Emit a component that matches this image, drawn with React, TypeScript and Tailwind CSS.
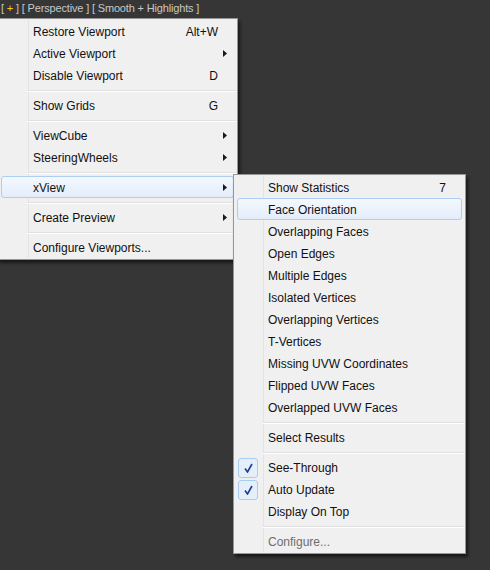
import React from "react";

type Item =
  | { kind: "sep" }
  | {
      kind: "item";
      label: string;
      shortcut?: string;
      arrow?: boolean;
      active?: boolean;
      checked?: boolean;
      disabled?: boolean;
    };

const sep: Item = { kind: "sep" };

const mainItems: Item[] = [
  { kind: "item", label: "Restore Viewport", shortcut: "Alt+W" },
  { kind: "item", label: "Active Viewport", arrow: true },
  { kind: "item", label: "Disable Viewport", shortcut: "D" },
  sep,
  { kind: "item", label: "Show Grids", shortcut: "G" },
  sep,
  { kind: "item", label: "ViewCube", arrow: true },
  { kind: "item", label: "SteeringWheels", arrow: true },
  sep,
  { kind: "item", label: "xView", arrow: true, active: true },
  sep,
  { kind: "item", label: "Create Preview", arrow: true },
  sep,
  { kind: "item", label: "Configure Viewports..." },
];

const xviewItems: Item[] = [
  { kind: "item", label: "Show Statistics", shortcut: "7" },
  { kind: "item", label: "Face Orientation", active: true },
  { kind: "item", label: "Overlapping Faces" },
  { kind: "item", label: "Open Edges" },
  { kind: "item", label: "Multiple Edges" },
  { kind: "item", label: "Isolated Vertices" },
  { kind: "item", label: "Overlapping Vertices" },
  { kind: "item", label: "T-Vertices" },
  { kind: "item", label: "Missing UVW Coordinates" },
  { kind: "item", label: "Flipped UVW Faces" },
  { kind: "item", label: "Overlapped UVW Faces" },
  sep,
  { kind: "item", label: "Select Results" },
  sep,
  { kind: "item", label: "See-Through", checked: true },
  { kind: "item", label: "Auto Update", checked: true },
  { kind: "item", label: "Display On Top" },
  sep,
  { kind: "item", label: "Configure...", disabled: true },
];

function Arrow() {
  return (
    <svg width="4" height="7" viewBox="0 0 4 7" className="ml-auto mr-[6px] mt-[1px]">
      <polygon points="0,0 4,3.5 0,7" fill="#1a1a1a" />
    </svg>
  );
}

function Check() {
  return (
    <span className="absolute left-0 top-[1px] flex h-[20px] w-[20px] items-center justify-center rounded-[3px] border border-[#a8cdf2] bg-[#e5effa]">
      <svg width="9" height="10" viewBox="0 0 9 10">
        <path d="M1 5.5 L3.5 9 L8 1" stroke="#1c3d9c" strokeWidth="1.6" fill="none" />
      </svg>
    </span>
  );
}

function MenuRows({ items, main }: { items: Item[]; main: boolean }) {
  const lineLeft = main ? "left-[27px]" : "left-[26px]";
  const sepLeft = main ? "ml-[27px]" : "ml-[26px]";
  const textPad = main ? "pl-[31px]" : "pl-[30px]";
  return (
    <div className="relative">
      <div className={`absolute top-0 bottom-0 w-[1px] bg-[#e2e3e3] ${lineLeft}`} />
      {items.map((item, i) => {
        if (item.kind === "sep") {
          return (
            <div key={i} className="relative h-[8px] pt-[4px]">
              <div className={`mr-[-2px] h-[1px] bg-[#e0e0e0] ${sepLeft}`} />
              <div className={`mr-[-2px] h-[1px] bg-white ${sepLeft}`} />
            </div>
          );
        }
        return (
          <div
            key={i}
            className={`relative flex h-[22px] items-center rounded-[3px] border ${
              item.active
                ? "border-[#aecdf3] bg-gradient-to-b from-[#f4f8fe] to-[#e3edfa]"
                : "border-transparent"
            }`}
          >
            {item.checked && <Check />}
            <span
              className={`pt-[2px] ${textPad} ${item.disabled ? "text-[#6d6d6d]" : "text-[#111111]"}`}
            >
              {item.label}
            </span>
            {item.shortcut && (
              <span className="ml-auto mr-[15px] pt-[2px] text-[#111111]">{item.shortcut}</span>
            )}
            {item.arrow && <Arrow />}
          </div>
        );
      })}
    </div>
  );
}

export default function App() {
  return (
    <div
      className="relative h-[570px] w-[490px] overflow-hidden bg-[#363636] text-[12px] leading-[16px]"
      style={{ fontFamily: '"Liberation Sans", Arial, sans-serif' }}
    >
      <div className="h-[18px] whitespace-pre pl-[1px] pt-[1px] text-[11px] leading-[14px] tracking-[-0.16px] text-[#c8c8c8]">
        [ <span className="text-[#f5d000]">+</span> ] [ Perspective ] [ Smooth + Highlights ]
      </div>

      <div className="absolute left-[-3px] top-[18px] w-[241px] border border-[#979797] bg-[#f0f0f0] px-[3px] py-[1px] shadow-[2px_3px_3px_rgba(0,0,0,0.55)]">
        <MenuRows items={mainItems} main />
      </div>

      <div className="absolute left-[233px] top-[174px] w-[233px] border border-[#979797] bg-[#f0f0f0] px-[3px] py-[1px] shadow-[2px_3px_3px_rgba(0,0,0,0.55)]">
        <MenuRows items={xviewItems} main={false} />
      </div>
    </div>
  );
}
